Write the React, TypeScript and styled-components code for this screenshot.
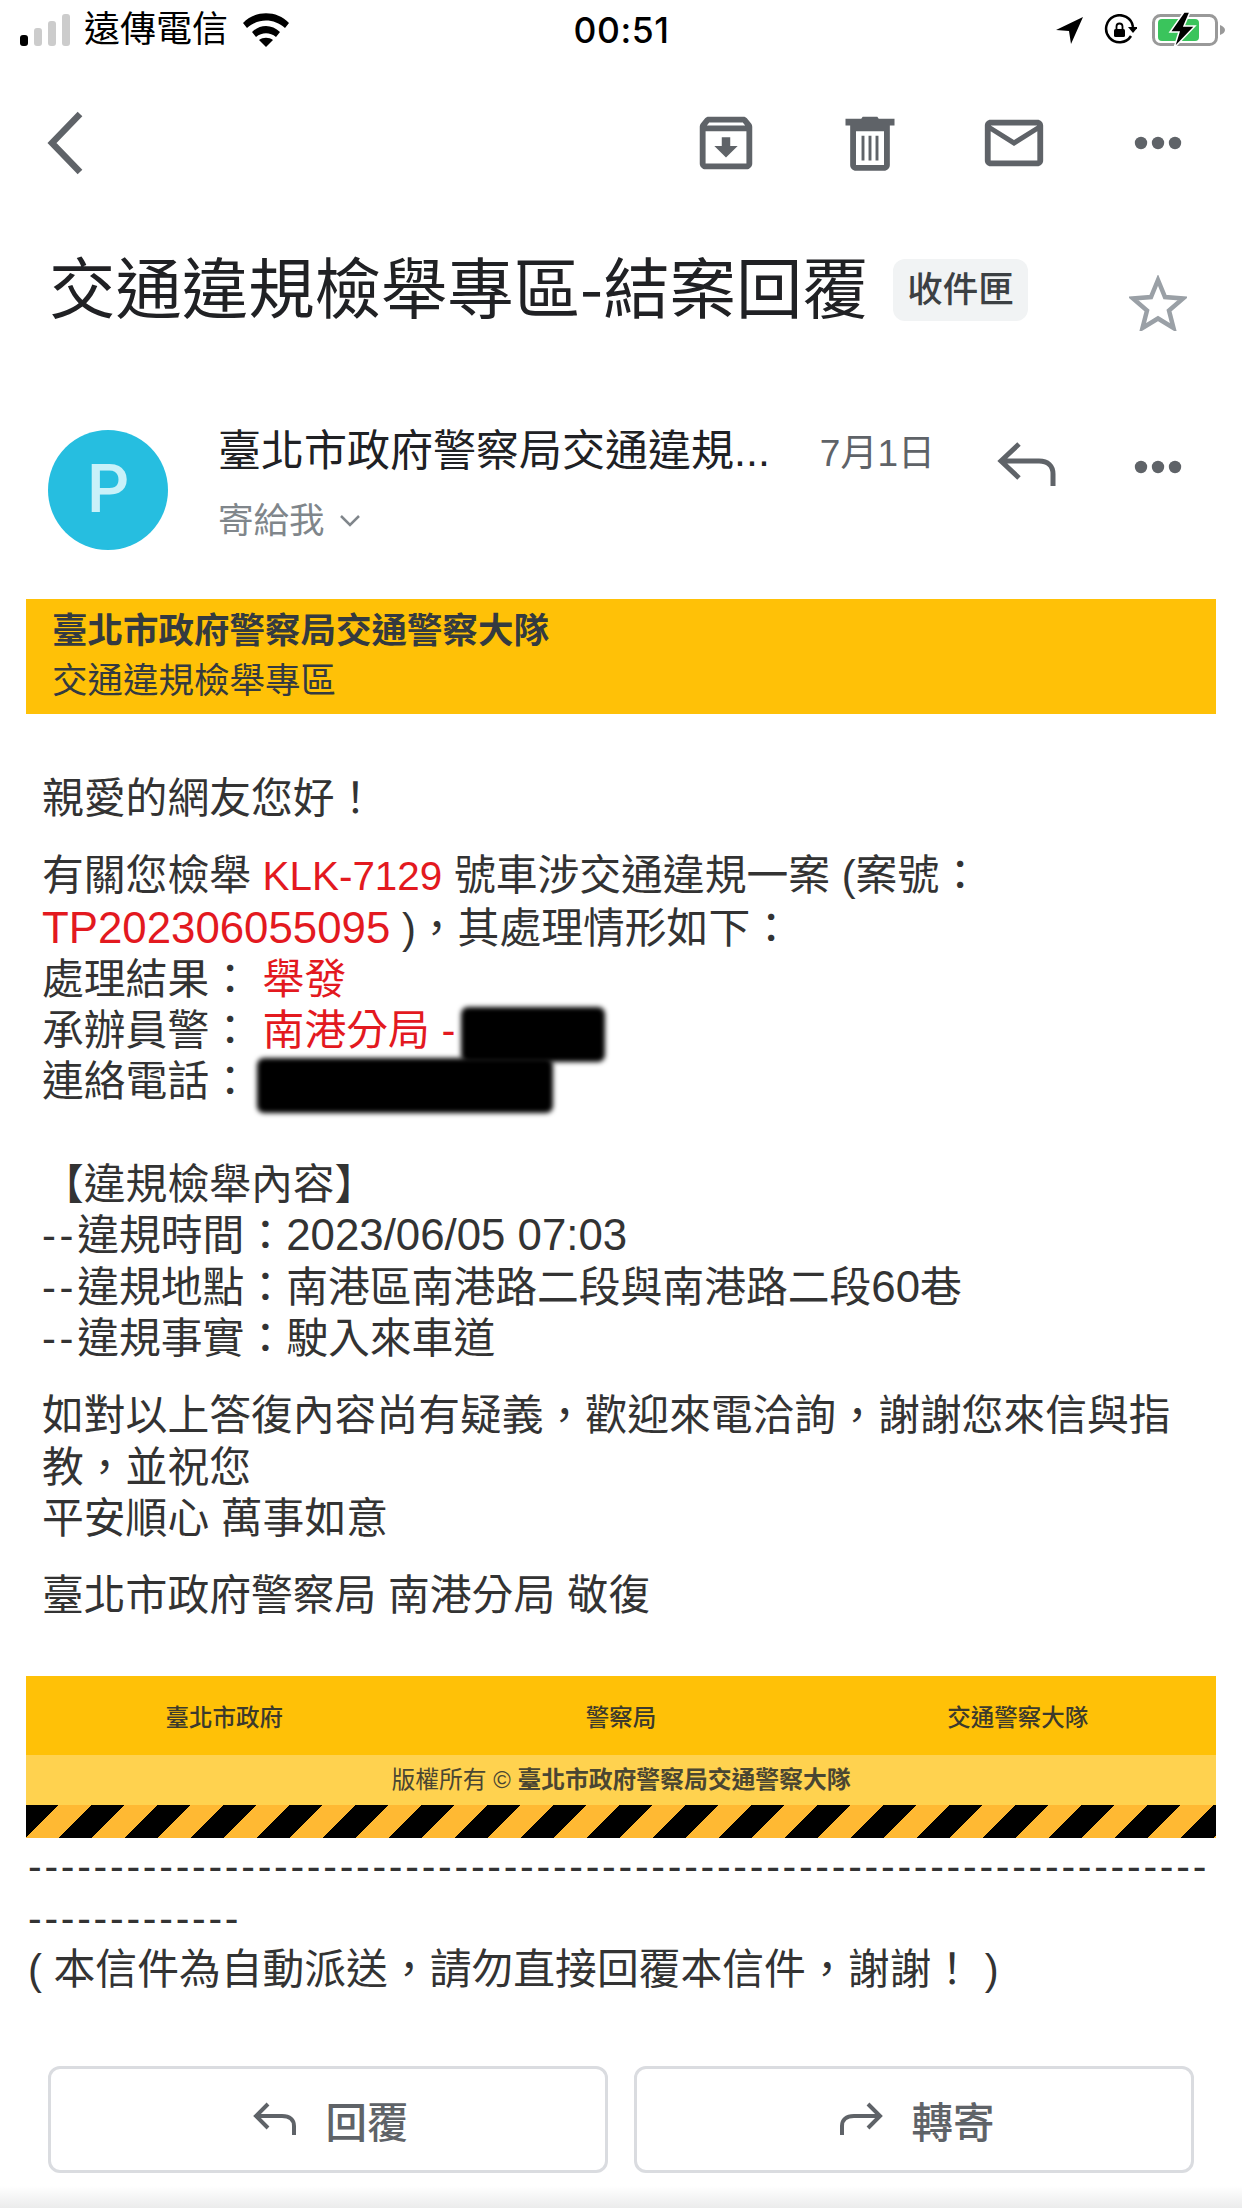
import React from 'react'
import styled, { createGlobalStyle } from 'styled-components'

const GlobalStyle = createGlobalStyle`
	html, body {
		margin: 0;
		padding: 0;
		background: #fff;
	}
	body {
		font-family: "Liberation Sans", "Noto Sans CJK TC", sans-serif;
	}
`

const Page = styled.div`
	position: relative;
	width: 1242px;
	height: 2208px;
	overflow: hidden;
	background: #fff;
	&::after {
		content: '';
		position: absolute;
		left: 0;
		right: 0;
		bottom: 0;
		height: 22px;
		background: linear-gradient(to bottom, rgba(60, 64, 67, 0), rgba(60, 64, 67, 0.1));
	}
`

const StatusBar = styled.div`
	display: flex;
	align-items: center;
	height: 60px;
	padding: 0 16px 0 20px;
	color: #000;
`

const StatusSide = styled.div`
	flex: 1;
	display: flex;
	align-items: center;
	justify-content: ${(p: { $end?: boolean }) => (p.$end ? 'flex-end' : 'flex-start')};
`

const StatusIcon = styled.svg<{ $gap: number }>`
	margin-right: ${(p) => p.$gap}px;
`

const Carrier = styled.span`
	margin: 0 15px 0 14px;
	font-size: 36px;
	line-height: 60px;
`

const Clock = styled.span`
	margin-left: -3px;
	font-family: "Inter", "Liberation Sans", sans-serif;
	font-size: 35.5px;
	font-weight: 500;
	letter-spacing: 0.5px;
`

const Toolbar = styled.div`
	display: flex;
	align-items: center;
	justify-content: space-between;
	height: 166px;
	padding: 0 49px 0 44px;
`

const ToolGroup = styled.div`
	display: flex;
	align-items: center;
	gap: 74px;
`

const ToolIcon = styled.svg`
	display: block;
	width: 70px;
	height: 70px;
	fill: #5f6368;
`

const SubjectRow = styled.div`
	display: flex;
	align-items: flex-start;
	padding: 20px 55px 0 49px;
`

const Subject = styled.h1`
	margin: 0;
	font-family: "Noto Sans CJK TC", sans-serif;
	font-size: 66.4px;
	line-height: 76px;
	font-weight: 400;
	color: #202124;
	white-space: nowrap;
`

const Badge = styled.span`
	margin: 13px 0 0 24px;
	padding: 0 14.5px;
	height: 62px;
	line-height: 62px;
	border-radius: 12px;
	background: #f1f3f4;
	font-size: 35.5px;
	font-weight: 500;
	color: #3c4043;
	white-space: nowrap;
`

const StarWrap = styled.div`
	margin: 29px 0 0 auto;
`

const SenderRow = styled.div`
	display: flex;
	align-items: flex-start;
	margin-top: 95px;
	padding: 0 49px 0 48px;
`

const Avatar = styled.div`
	flex: none;
	width: 120px;
	height: 120px;
	border-radius: 50%;
	background: #26bee0;
	color: #c9f1f9;
	font-family: "Roboto", sans-serif;
	font-size: 66px;
	font-weight: 500;
	line-height: 120px;
	text-align: center;
`

const SenderInfo = styled.div`
	flex: 1;
	margin: -4px 0 0 50px;
`

const SenderName = styled.div`
	font-size: 43px;
	line-height: 50px;
	color: #202124;
	white-space: nowrap;
`

const DateText = styled.span`
	margin-left: 50px;
	font-size: 37px;
	color: #5f6368;
`

const ToLine = styled.div`
	display: flex;
	align-items: center;
	gap: 14px;
	margin-top: 17px;
	font-size: 35.5px;
	line-height: 50px;
	color: #80868b;
`

const SenderActions = styled.div`
	display: flex;
	align-items: center;
	gap: 61px;
	margin-top: 2px;
`

const Banner = styled.div`
	margin: 49px 26px 0;
	height: 115px;
	padding: 7px 26px;
	box-sizing: border-box;
	background: #ffc107;
	color: #343a40;
	font-size: 35.5px;
	line-height: 50px;
`

const BannerTitle = styled.div`
	font-weight: 700;
`

const Body = styled.div`
	padding: 0 42px;
	margin-top: 59px;
	font-size: 41.8px;
	line-height: 51.3px;
	color: #333;
	white-space: nowrap;
`

const Para = styled.p`
	margin: 0 0 26px;
`

const Red = styled.span`
	color: #e3191f;
`

const Plate = styled(Red)`
	font-size: 40.4px;
`

const Num = styled.span`
	font-size: 43.8px;
	line-height: 1;
`

const Hyphens = styled.span`
	letter-spacing: 0.088em;
`

const Redaction = styled.span<{ $w: number }>`
	display: inline-block;
	width: ${(p) => p.$w}px;
	height: 55px;
	margin: -6px 0 -6px -6px;
	vertical-align: middle;
	background: #000;
	border-radius: 7px;
	filter: blur(2.5px);
`

const SiteFooter = styled.div`
	margin: 55px 26px 0;
`

const FooterLinks = styled.div`
	display: grid;
	grid-template-columns: repeat(3, 1fr);
	align-items: center;
	height: 79px;
	background: #ffc107;
	color: #3c3a2c;
	font-size: 23.5px;
	font-weight: 500;
	text-align: center;
`

const Copyright = styled.div`
	height: 50px;
	line-height: 50px;
	background: #ffd24f;
	color: #4a4632;
	font-size: 23.8px;
	text-align: center;
`

const Strong = styled.b`
	font-weight: 700;
`

const HazardStripe = styled.div`
	height: 33px;
	background: repeating-linear-gradient(
		-45deg,
		#000 2.1px,
		#000 25.43px,
		#ffb933 25.43px,
		#ffb933 48.77px
	);
`

const Notice = styled.div`
	margin: 2px 26px 0 28px;
	font-size: 41.8px;
	line-height: 51px;
	color: #333;
	white-space: nowrap;
`

const Dashes = styled.span`
	font-size: 41px;
	letter-spacing: 2.75px;
`

const ButtonRow = styled.div`
	position: absolute;
	left: 48px;
	right: 48px;
	bottom: 35px;
	display: grid;
	grid-template-columns: 1fr 1fr;
	gap: 26px;
`

const ActionButton = styled.div`
	display: flex;
	align-items: center;
	justify-content: center;
	gap: 28px;
	height: 107px;
	padding-left: 6px;
	box-sizing: border-box;
	border: 3px solid #dadce0;
	border-radius: 12px;
	color: #5f6368;
	font-size: 41.5px;
	font-weight: 500;
`

const SmallArrow = styled.svg`
	width: 44px;
	height: 44px;
	fill: none;
	stroke: #5f6368;
	stroke-width: 4;
`

const More = () => (
	<ToolIcon viewBox="0 0 70 70">
		<circle cx="18" cy="35" r="6.2" />
		<circle cx="35" cy="35" r="6.2" />
		<circle cx="52" cy="35" r="6.2" />
	</ToolIcon>
)

const ReplyArrow = styled(ToolIcon)`
	fill: none;
	stroke: #5f6368;
	stroke-width: 5;
`

const App: React.FC = () => {
	return (
		<Page>
			<GlobalStyle />
			<StatusBar>
				<StatusSide>
					<svg width="50" height="34" viewBox="0 0 50 34">
						<rect x="0" y="22" width="8" height="11" rx="3" fill="#000" />
						<rect x="14" y="15" width="8" height="18" rx="3" fill="#ccc" />
						<rect x="28" y="8" width="8" height="25" rx="3" fill="#ccc" />
						<rect x="42" y="1" width="8" height="32" rx="3" fill="#ccc" />
					</svg>
					<Carrier>遠傳電信</Carrier>
					<svg width="46" height="34" viewBox="0 0 46 34">
						<path d="M0 10C12-3 34-3 46 10l-4 5C31 5 15 5 4 15z" fill="#000" />
						<path d="M9 19c8-8 20-8 28 0l-4 5c-6-5-14-5-20 0z" fill="#000" />
						<path d="M23 34 16 27c4-3 10-3 14 0z" fill="#000" />
					</svg>
				</StatusSide>
				<Clock>00:51</Clock>
				<StatusSide $end>
					<StatusIcon $gap={20} width="28" height="28" viewBox="0 0 28 28">
						<path d="M27 1 0 14l13 1 2 13z" fill="#000" />
					</StatusIcon>
					<StatusIcon $gap={15} width="33" height="32" viewBox="0 0 33 32">
						<path d="M27 22A13.5 13.5 0 1 1 29 13" fill="none" stroke="#000" strokeWidth="2.5" />
						<path d="M24 13h10l-5 6z" fill="#000" />
						<rect x="10" y="15" width="11" height="8" rx="1.5" fill="#000" />
						<path d="M12.500 15v-2.500a3 3 0 0 1 6 0v2.500" fill="none" stroke="#000" strokeWidth="1.8" />
					</StatusIcon>
					<svg width="74" height="36" viewBox="0 0 74 36">
						<rect x="1.5" y="3.5" width="63" height="29" rx="7" fill="none" stroke="#999" strokeWidth="3" />
						<path d="M68 13c3 1 5 3 5 5s-2 4-5 5z" fill="#999" />
						<rect x="6" y="7" width="41" height="22" rx="4" fill="#3ac45c" />
						<path d="M32 0 18 20h9l-5 16 21-22H32l6-14z" fill="#000" stroke="#fff" strokeWidth="1.5" />
					</svg>
				</StatusSide>
			</StatusBar>

			<Toolbar>
				<svg width="40" height="64" viewBox="0 0 40 64" fill="none" stroke="#5f6368" strokeWidth="6.5">
					<path d="M36 3 8 32l28 29" />
				</svg>
				<ToolGroup>
					<ToolIcon viewBox="0 0 24 24">
						<path d="M20.54 5.23l-1.39-1.68C18.88 3.21 18.47 3 18 3H6c-.47 0-.88.21-1.16.55L3.46 5.23C3.17 5.57 3 6.02 3 6.5V19c0 1.1.9 2 2 2h14c1.1 0 2-.9 2-2V6.5c0-.48-.17-.93-.46-1.27zM6.24 5h11.52l.81.97H5.44l.8-.97zM5 19V8h14v11H5zm8.45-9h-2.9v3H8l4 4 4-4h-2.55z" />
					</ToolIcon>
					<ToolIcon viewBox="0 0 24 24">
						<path
							fillRule="evenodd"
							d="M5.200 6h13.600v13.500c0 1.100-.9 2-2 2H7.200c-1.100 0-2-.9-2-2zm2 2v11.500h9.600V8zM9.500 3h5l.5.7h5.400V6H3.600V3.700H9zM9.100 9.500h1v8.500h-1zm2.400 0h1v8.500h-1zm2.400 0h1v8.500h-1z"
						/>
					</ToolIcon>
					<ToolIcon viewBox="0 0 24 24">
						<path d="M22 6c0-1.1-.9-2-2-2H4c-1.1 0-2 .9-2 2v12c0 1.1.9 2 2 2h16c1.1 0 2-.9 2-2V6zm-2 0l-8 5-8-5h16zm0 12H4V8l8 5 8-5v10z" />
					</ToolIcon>
					<More />
				</ToolGroup>
			</Toolbar>

			<SubjectRow>
				<Subject>交通違規檢舉專區-結案回覆</Subject>
				<Badge>收件匣</Badge>
				<StarWrap>
					<svg width="58" height="56" viewBox="0 0 58 56" fill="none" stroke="#9aa0a6" strokeWidth="4.5">
						<path d="M29 5l7 17 18 1.500-14 12 4.500 17.500L29 43.500 13.500 53 18 35.500 4 23.500 22 22z" />
					</svg>
				</StarWrap>
			</SubjectRow>

			<SenderRow>
				<Avatar>P</Avatar>
				<SenderInfo>
					<SenderName>
						臺北市政府警察局交通違規...
						<DateText>7月1日</DateText>
					</SenderName>
					<ToLine>
						寄給我
						<svg width="22" height="14" viewBox="0 0 22 14" fill="none" stroke="#80868b" strokeWidth="2.500">
							<path d="M2 2l9 9 9-9" />
						</svg>
					</ToLine>
				</SenderInfo>
				<SenderActions>
					<ReplyArrow viewBox="0 0 70 70">
						<path d="M27 12 9 29l18 17M10 29h37c9 0 14 5 14 13v12" />
					</ReplyArrow>
					<More />
				</SenderActions>
			</SenderRow>

			<Banner>
				<BannerTitle>臺北市政府警察局交通警察大隊</BannerTitle>
				<div>交通違規檢舉專區</div>
			</Banner>

			<Body>
				<Para>親愛的網友您好！</Para>
				<Para>
					有關您檢舉 <Plate>KLK-7129</Plate> 號車涉交通違規一案 (案號：
					<br />
					<Red>
						<Num>TP202306055095</Num>
					</Red>{' '}
					)，其處理情形如下：
					<br />
					處理結果： <Red>舉發</Red>
					<br />
					承辦員警： <Red>南港分局 - </Red>
					<Redaction $w={144} />
					<br />
					連絡電話： <Redaction $w={296} />
					<br />
					<br />
					【違規檢舉內容】
					<br />
					<Hyphens>--</Hyphens>違規時間：<Num>2023/06/05 07:03</Num>
					<br />
					<Hyphens>--</Hyphens>違規地點：南港區南港路二段與南港路二段<Num>60</Num>巷
					<br />
					<Hyphens>--</Hyphens>違規事實：駛入來車道
				</Para>
				<Para>
					如對以上答復內容尚有疑義，歡迎來電洽詢，謝謝您來信與指
					<br />
					教，並祝您
					<br />
					平安順心 萬事如意
				</Para>
				<Para>臺北市政府警察局 南港分局 敬復</Para>
			</Body>

			<SiteFooter>
				<FooterLinks>
					<span>臺北市政府</span>
					<span>警察局</span>
					<span>交通警察大隊</span>
				</FooterLinks>
				<Copyright>
					版權所有 © <Strong>臺北市政府警察局交通警察大隊</Strong>
				</Copyright>
				<HazardStripe />
			</SiteFooter>

			<Notice>
				<Dashes>{'-'.repeat(72)}</Dashes>
				<br />
				<Dashes>{'-'.repeat(13)}</Dashes>
				<br />( 本信件為自動派送，請勿直接回覆本信件，謝謝！ )
			</Notice>

			<ButtonRow>
				<ActionButton>
					<SmallArrow viewBox="0 0 44 44">
						<path d="M15 6 3 18l12 12M4 18h25c8 0 12 4 12 10v9" />
					</SmallArrow>
					回覆
				</ActionButton>
				<ActionButton>
					<SmallArrow viewBox="0 0 44 44">
						<path d="M29 6l12 12-12 12M40 18H15C7 18 3 22 3 28v9" />
					</SmallArrow>
					轉寄
				</ActionButton>
			</ButtonRow>
		</Page>
	)
}

export default App
